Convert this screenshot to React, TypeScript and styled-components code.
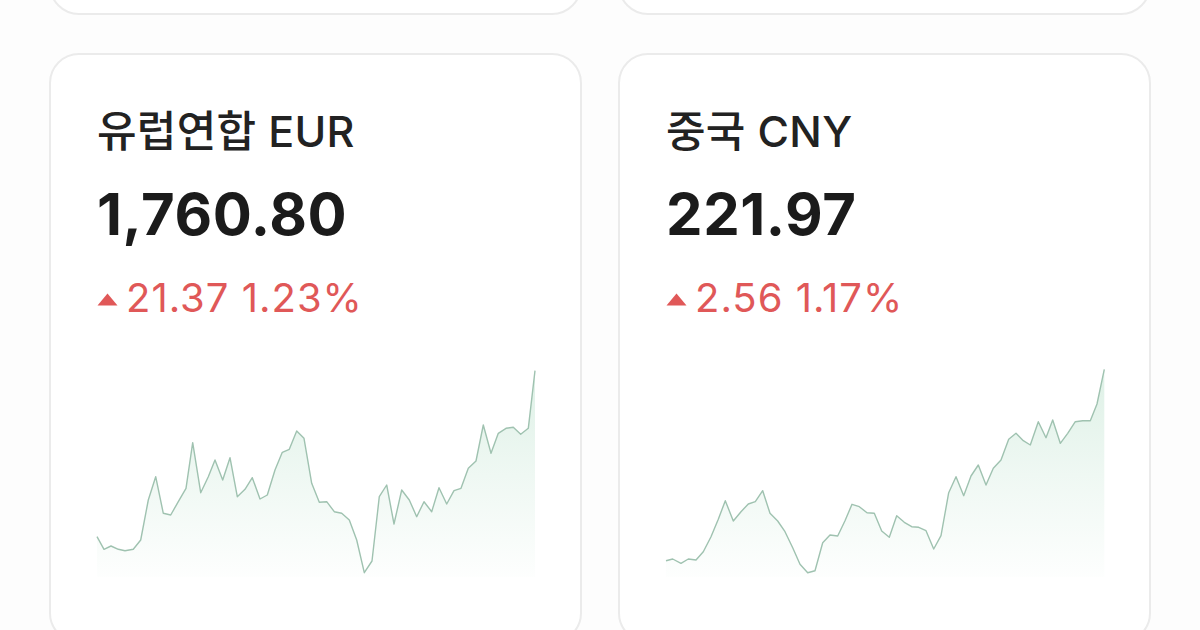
import React from "react";
import styled, { createGlobalStyle } from "styled-components";

const GlobalStyle = createGlobalStyle`
  html, body { margin: 0; padding: 0; background: #fdfdfd; }
  body { font-family: Inter, "Noto Sans CJK KR", sans-serif; overflow: hidden; }
`;

const Page = styled.div`
  width: 1200px;
  height: 630px;
  overflow: hidden;
  box-sizing: border-box;
  padding: 0 50px 0 49px;
`;

const Grid = styled.div`
  display: grid;
  grid-template-columns: 533px 533px;
  column-gap: 36px;
  row-gap: 38px;
  margin-top: -185px;
`;

const Card = styled.div<{ $stub?: boolean }>`
  box-sizing: border-box;
  height: ${(p) => (p.$stub ? "200px" : "590px")};
  background: #ffffff;
  border: 2px solid #ebebeb;
  border-radius: 30px;
  padding: 48px 46px 0 46px;
  display: flex;
  flex-direction: column;
`;

const Title = styled.div`
  font-family: Inter, "Noto Sans CJK KR", sans-serif;
  font-size: 43px;
  font-weight: 500;
  color: #222222;
  line-height: 56px;
  letter-spacing: 0.3px;
`;

const Price = styled.div`
  margin-top: 23px;
  font-family: Inter, sans-serif;
  font-size: 58px;
  font-weight: 700;
  color: #1b1b1b;
  line-height: 64px;
  letter-spacing: 0.6px;
`;

const Change = styled.div`
  margin-top: 30px;
  display: flex;
  align-items: center;
  gap: 8px;
  font-family: Inter, sans-serif;
  font-size: 40px;
  font-weight: 400;
  color: #e05858;
  line-height: 44px;
  letter-spacing: 1px;
`;

const ChartBox = styled.div`
  margin-top: 46px;
  width: 438px;
  height: 212px;
`;

type Pt = [number, number];

const eurPts: Pt[] = [
  [0, 170.7], [7, 183.3], [14, 180], [21.3, 183.3], [28, 184.7], [36.3, 183.3], [43.7, 174], [51.3, 134],
  [58.7, 110.7], [66.3, 147.3], [73.7, 149], [81.3, 135.7], [89, 122.3], [95.7, 76.7], [103.7, 126.7],
  [111.3, 110.7], [118, 94], [125.7, 114], [133, 91.7], [140.3, 130.7], [148, 123.3], [155.3, 111.7],
  [163, 133], [170.3, 129], [178, 104], [185.3, 86.3], [192.3, 83.3], [199.7, 65], [207, 72.3],
  [214.7, 117.3], [222.3, 136.3], [229.7, 135.7], [237.3, 145.7], [244.7, 147.3], [252.3, 154],
  [259.7, 174], [267.3, 206.7], [275, 195], [282.3, 130.7], [289.7, 119], [297, 158], [304.7, 124],
  [312.3, 134], [319.7, 150.7], [327, 135.7], [334.7, 145.7], [342, 121.7], [349.7, 138], [357, 124.7],
  [364, 122.3], [371.3, 102.3], [379, 95], [386.3, 59], [394, 87.3], [401.3, 67.3], [409, 62.3],
  [416.3, 61.3], [423.7, 68.3], [431.3, 62.3], [438, 4.7],
];

const cnyPts: Pt[] = [
  [0, 194.7], [6.7, 193], [15, 197.3], [22.3, 193], [30, 194], [37.3, 185.7], [45, 170.7], [52.3, 153.3],
  [59.3, 134.7], [67.3, 155], [75, 145.7], [82.3, 138], [89.3, 135.7], [96.7, 124.7], [104, 147.3],
  [111.7, 155], [119, 165.7], [126.7, 181.7], [134, 198.3], [141.7, 206.7], [149, 204.7], [156.7, 176.7],
  [164, 169], [171.7, 170], [179, 154.7], [186, 138.3], [193.3, 140.7], [201, 146.7], [208.3, 147.3],
  [215.7, 165], [223.3, 171.3], [230.7, 149.7], [238.3, 156.3], [245.7, 160.7], [252.7, 161.3],
  [260, 164.7], [267.7, 183], [275, 169.7], [282.7, 126.7], [290, 110.7], [297.7, 129.7], [305, 110],
  [312.3, 99], [320, 119], [327.3, 102.3], [335, 94], [342.7, 73.3], [350, 67.3], [357.3, 74.7],
  [364.3, 79], [372.3, 55.7], [380, 71.7], [386.7, 54], [394.3, 77.3], [401.7, 67.3], [409.3, 55.7],
  [416.7, 54.7], [424.3, 54.7], [431, 38], [438.3, 3.3],
];

const Sparkline: React.FC<{ pts: Pt[]; id: string }> = ({ pts, id }) => {
  const line = pts.map((p, i) => `${i ? "L" : "M"}${p[0]},${p[1]}`).join(" ");
  const area = `${line} L${pts[pts.length - 1][0]},211 L${pts[0][0]},211 Z`;
  return (
    <svg width="438" height="212" viewBox="0 0 438 212" style={{ display: "block", overflow: "visible" }}>
      <defs>
        <linearGradient id={id} x1="0" y1="0" x2="0" y2="1">
          <stop offset="0" stopColor="#5cb885" stopOpacity="0.2" />
          <stop offset="0.5" stopColor="#5cb885" stopOpacity="0.1" />
          <stop offset="1" stopColor="#5cb885" stopOpacity="0.01" />
        </linearGradient>
      </defs>
      <path d={area} fill={`url(#${id})`} stroke="none" />
      <path d={line} fill="none" stroke="#9fc2b0" strokeWidth="1.4" strokeLinejoin="round" />
    </svg>
  );
};

const Tri = () => (
  <svg width="21" height="13" viewBox="0 0 21 13" style={{ display: "block", marginTop: "2px" }}>
    <path d="M10.5 0.5 L20.5 12.5 L0.5 12.5 Z" fill="#e05858" />
  </svg>
);

type Item = { title: string; price: string; diff: string; pct: string; pts: Pt[]; id: string };

const items: Item[] = [
  { title: "유럽연합 EUR", price: "1,760.80", diff: "21.37", pct: "1.23%", pts: eurPts, id: "gEur" },
  { title: "중국 CNY", price: "221.97", diff: "2.56", pct: "1.17%", pts: cnyPts, id: "gCny" },
];

export default function App() {
  return (
    <>
      <GlobalStyle />
      <Page>
        <Grid>
          <Card $stub />
          <Card $stub />
          {items.map((it) => (
            <Card key={it.id}>
              <Title>{it.title}</Title>
              <Price>{it.price}</Price>
              <Change>
                <Tri />
                <span>
                  {it.diff} {it.pct}
                </span>
              </Change>
              <ChartBox>
                <Sparkline pts={it.pts} id={it.id} />
              </ChartBox>
            </Card>
          ))}
        </Grid>
      </Page>
    </>
  );
}
